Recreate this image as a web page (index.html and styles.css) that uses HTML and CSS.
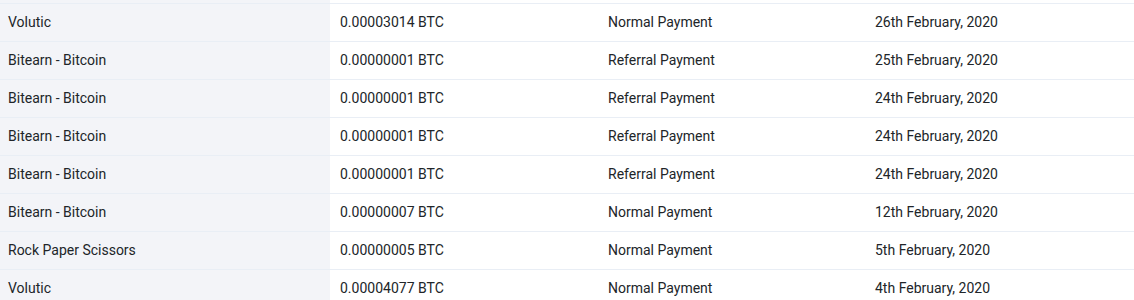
FILE: index.html
```html
<!DOCTYPE html>
<html>
<head>
<meta charset="utf-8">
<link rel="stylesheet" href="styles.css">
</head>
<body>
<table class="tx">
  <colgroup>
    <col class="c1"><col class="c2"><col class="c3"><col class="c4">
  </colgroup>
  <tbody>
    <tr class="spacer"><td></td><td></td><td></td><td></td></tr>
    <tr><td>Volutic</td><td>0.00003014 BTC</td><td>Normal Payment</td><td>26th February, 2020</td></tr>
    <tr><td>Bitearn - Bitcoin</td><td>0.00000001 BTC</td><td>Referral Payment</td><td>25th February, 2020</td></tr>
    <tr><td>Bitearn - Bitcoin</td><td>0.00000001 BTC</td><td>Referral Payment</td><td>24th February, 2020</td></tr>
    <tr><td>Bitearn - Bitcoin</td><td>0.00000001 BTC</td><td>Referral Payment</td><td>24th February, 2020</td></tr>
    <tr><td>Bitearn - Bitcoin</td><td>0.00000001 BTC</td><td>Referral Payment</td><td>24th February, 2020</td></tr>
    <tr><td>Bitearn - Bitcoin</td><td>0.00000007 BTC</td><td>Normal Payment</td><td>12th February, 2020</td></tr>
    <tr><td>Rock Paper Scissors</td><td>0.00000005 BTC</td><td>Normal Payment</td><td>5th February, 2020</td></tr>
    <tr><td>Volutic</td><td>0.00004077 BTC</td><td>Normal Payment</td><td>4th February, 2020</td></tr>
  </tbody>
</table>
</body>
</html>
```
FILE: styles.css
```css
html, body {
  margin: 0;
  padding: 0;
  background: #ffffff;
}
body {
  font-family: Roboto, "Liberation Sans", Arial, sans-serif;
  font-size: 14px;
  color: #212529;
}
.tx {
  width: 1134px;
  border-collapse: collapse;
  table-layout: fixed;
}
.c1 { width: 330px; }
.c2 { width: 268px; }
.c3 { width: 267px; }
.c4 { width: 269px; }
.tx td {
  padding: 10px 10px 11px;
  border-bottom: 1px solid #e9eef5;
  vertical-align: top;
  white-space: nowrap;
  line-height: 16px;
}
.tx td:first-child {
  background: #f3f4f8;
  padding-left: 8px;
}
.tx tr.spacer td {
  height: 3px;
  padding: 0;
  line-height: 0;
}
```
